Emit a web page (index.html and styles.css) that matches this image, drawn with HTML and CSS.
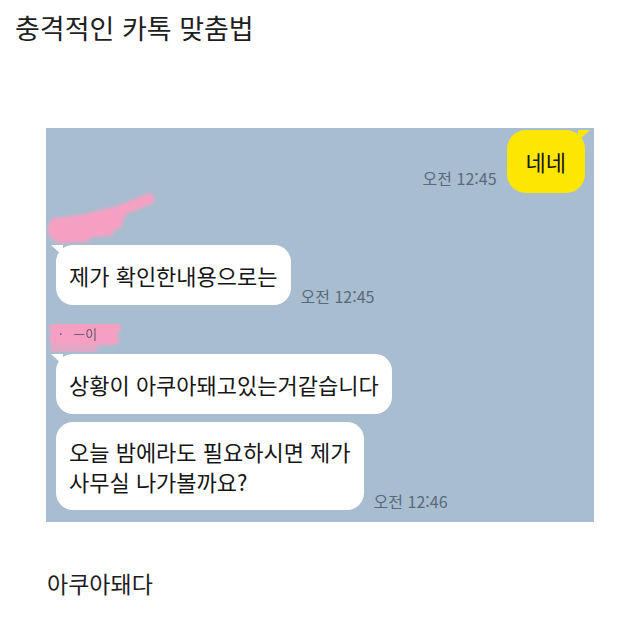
FILE: index.html
```html
<!DOCTYPE html>
<html lang="ko">
<head>
    <meta charset="UTF-8">
    <meta name="viewport" content="width=device-width, initial-scale=1.0">
    <title>충격적인 카톡 맞춤법</title>
    <link rel="stylesheet" href="styles.css">
</head>
<body>
    <h1 class="title">충격적인 카톡 맞춤법</h1>

    <div class="chat">
        <div class="row me">
            <span class="time">오전 12:45</span>
            <div class="bubble yellow tail">네네</div>
        </div>

        <div class="name name-one">
            <svg width="112" height="54" viewBox="0 0 112 54">
                <defs>
                    <filter id="soft" x="-10%" y="-20%" width="120%" height="140%"><feGaussianBlur stdDeviation="1.6" /></filter>
                </defs>
                <g filter="url(#soft)" stroke="#f5a0c2" stroke-linecap="round" fill="none">
                    <path d="M40 28 L72 20 L102 8" stroke-width="11" />
                    <path d="M8 32 L74 24" stroke-width="10" />
                    <path d="M6 38 L70 32" stroke-width="12" />
                    <path d="M8 44 L62 40" stroke-width="10" />
                    <path d="M12 49 L40 48" stroke-width="6" />
                </g>
            </svg>
        </div>

        <div class="row">
            <div class="bubble tail">제가 확인한내용으로는</div>
            <span class="time">오전 12:45</span>
        </div>

        <div class="name name-two">
            <svg width="80" height="38" viewBox="0 0 80 38">
                <defs>
                    <filter id="soft2" x="-10%" y="-20%" width="120%" height="140%"><feGaussianBlur stdDeviation="1.8" /></filter>
                </defs>
                <g filter="url(#soft2)" stroke="#f5a0c2" stroke-linecap="round" fill="none">
                    <path d="M8 9 L68 8" stroke-width="12" />
                    <path d="M8 19 L66 19" stroke-width="12" />
                    <path d="M8 28 L46 28" stroke-width="10" stroke-opacity="0.7" />
                </g>
            </svg>
            <span class="hidden-name">·&nbsp;&nbsp;&nbsp;—이</span>
        </div>

        <div class="row">
            <div class="bubble tail">상황이 아쿠아돼고있는거같습니다</div>
        </div>

        <div class="row second">
            <div class="bubble">오늘 밤에라도 필요하시면 제가<br>사무실 나가볼까요?</div>
            <span class="time">오전 12:46</span>
        </div>
    </div>

    <p class="caption">아쿠아돼다</p>
</body>
</html>
```

FILE: styles.css
```css
body {
    margin: 0;
    padding: 0;
    background: #fff;
    color: #1b1b1b;
    font-family: "Noto Sans CJK KR", "Noto Sans", sans-serif;
}
.title {
    margin: 9px 0 0 15px;
    font-size: 27px;
    font-weight: 400;
    line-height: 38px;
    color: #1e1e1e;
}
.chat {
    box-sizing: border-box;
    width: 548px;
    height: 394px;
    margin: 81px 0 0 46px;
    padding: 2px 9px 0 10px;
    background: #a9bdd0;
    display: flex;
    flex-direction: column;
}
.row {
    display: flex;
    align-items: flex-end;
    gap: 10px;
}
.row.me {
    justify-content: flex-end;
}
.row.second {
    margin-top: 8px;
}
.bubble {
    position: relative;
    background: #fff;
    border-radius: 17px;
    padding: 15px 13px;
    font-size: 22px;
    line-height: 30px;
    color: #161616;
}
.row.second .bubble {
    padding: 14px 13px;
}
.bubble.yellow {
    background: #fde602;
    padding: 16px 19px 17px;
    border-radius: 19px;
}
.bubble.tail::before {
    content: "";
    position: absolute;
    top: 0;
    left: -5px;
    width: 12px;
    height: 11px;
    background: #fff;
    clip-path: polygon(0 0, 100% 0, 100% 100%);
}
.bubble.yellow.tail::before {
    left: auto;
    right: -5px;
    background: #fde602;
    clip-path: polygon(0 0, 100% 0, 0 100%);
}
.time {
    font-size: 16px;
    line-height: 18px;
    color: #58697a;
    white-space: nowrap;
}
.row.me .time {
    margin-bottom: 6px;
}
.name {
    position: relative;
    margin-left: -9px;
}
.name-one {
    height: 52px;
    margin-top: -2px;
    margin-bottom: 2px;
}
.name-two {
    height: 49px;
    padding-top: 15px;
    box-sizing: border-box;
}
.name svg {
    display: block;
}
.hidden-name {
    position: absolute;
    left: 12px;
    top: 22px;
    font-size: 13px;
    line-height: 13px;
    color: #3e4456;
    opacity: 0.8;
}
.caption {
    margin: 46px 0 0 47px;
    font-size: 23px;
    line-height: 30px;
    color: #1e1e1e;
}
```
